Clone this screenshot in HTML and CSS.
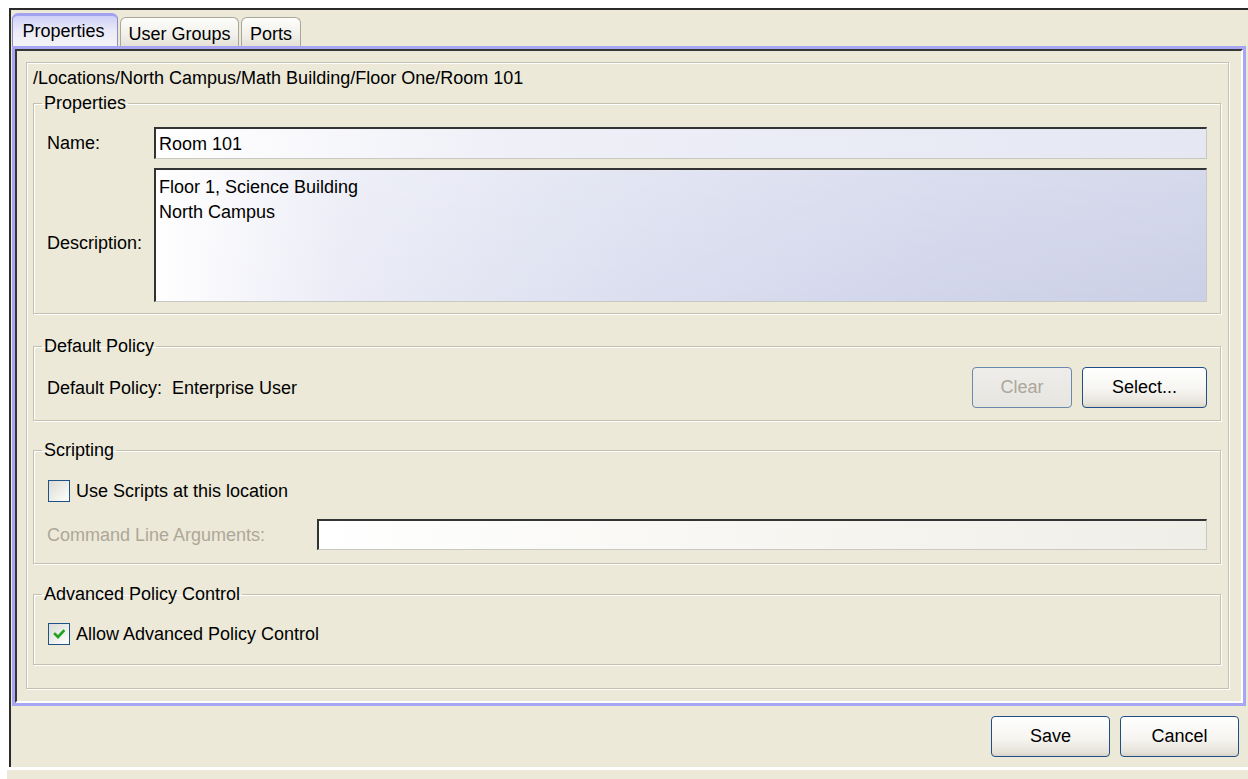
FILE: index.html
```html
<!DOCTYPE html>
<html>
<head>
<meta charset="utf-8">
<title>Location Properties</title>
<link rel="stylesheet" href="styles.css">
</head>
<body>
<div class="window">
  <div class="tabs">
    <div class="tab tab-active tab-props">Properties</div>
    <div class="tab tab-groups">User Groups</div>
    <div class="tab tab-ports">Ports</div>
  </div>

  <div class="tabpanel">
    <div class="panel-body">
      <div class="inner">
        <div class="path">/Locations/North Campus/Math Building/Floor One/Room 101</div>

        <fieldset class="group group-props">
          <legend>Properties</legend>
          <div class="form-grid">
            <span class="lbl">Name:</span>
            <div class="field name-field">Room 101</div>
            <span class="lbl lbl-desc">Description:</span>
            <div class="field desc-field">Floor 1, Science Building<br>North Campus</div>
          </div>
        </fieldset>

        <fieldset class="group group-policy">
          <legend>Default Policy</legend>
          <div class="policy-row">
            <span class="policy-text">Default Policy:<span class="policy-value">Enterprise User</span></span>
            <div class="btn-set">
              <button class="btn btn-clear" disabled>Clear</button>
              <button class="btn btn-select">Select...</button>
            </div>
          </div>
        </fieldset>

        <fieldset class="group group-script">
          <legend>Scripting</legend>
          <div class="check-row">
            <span class="check"></span>
            <span>Use Scripts at this location</span>
          </div>
          <div class="cmd-row">
            <span class="lbl-disabled">Command Line Arguments:</span>
            <div class="field cmd-field"></div>
          </div>
        </fieldset>

        <fieldset class="group group-adv">
          <legend>Advanced Policy Control</legend>
          <div class="check-row">
            <span class="check checked">
              <svg width="20" height="20" viewBox="0 0 20 20"><polyline points="6,10 9,13 14.5,7" fill="none" stroke="#21a121" stroke-width="2.6" stroke-linecap="square"/></svg>
            </span>
            <span>Allow Advanced Policy Control</span>
          </div>
        </fieldset>
      </div>
    </div>
  </div>

  <div class="footer">
    <button class="btn btn-foot">Save</button>
    <button class="btn btn-foot">Cancel</button>
  </div>
</div>
<div class="bottom-strip"></div>
</body>
</html>
```

FILE: styles.css
```css
* { box-sizing: border-box; }

html, body {
  margin: 0;
  padding: 0;
}

body {
  background: #fff;
  width: 1248px;
  height: 779px;
  overflow: hidden;
  font-family: "Liberation Sans", Arial, sans-serif;
  font-size: 18px;
  line-height: 20px;
  color: #000;
}

/* outer dialog frame */
.window {
  margin: 8px 0 0 9px;
  height: 759px;
  border-top: 2px solid #2a2a2a;
  border-left: 2px solid #2a2a2a;
  background: #ece9d8;
  padding: 3px 2px 0 1px;
  display: flex;
  flex-direction: column;
}

/* tab strip */
.tabs {
  display: flex;
  align-items: flex-end;
  height: 33px;
  gap: 2px;
}

.tab {
  height: 29px;
  border: 1px solid #a9a79a;
  border-bottom: none;
  border-radius: 6px 6px 0 0;
  background: linear-gradient(#fdfdfb, #f1f0ea 60%, #e4e2d6);
  display: flex;
  align-items: center;
  justify-content: center;
  padding-top: 3px;
}

.tab-active {
  height: 33px;
  border-color: #8d8cc4;
  border-top: 3px solid #a3a2f1;
  background: linear-gradient(#cfcff7, #ebebf8 50%, #f4f3f6);
  padding-top: 0;
  padding-right: 3px;
}

.tab-props { width: 106px; }
.tab-groups { width: 119px; }
.tab-ports { width: 60px; }

/* tab content panel */
.tabpanel {
  width: 1234px;
  height: 660px;
  border: 3px solid #a7a6f2;
  flex: none;
}

.panel-body {
  height: 100%;
  border-top: 2px solid #363636;
  border-left: 2px solid #363636;
  border-right: 2px solid #fff;
  border-bottom: 2px solid #fff;
  padding: 11px 12px 0 9px;
}

.inner {
  height: 627px;
  border: 1px solid #c4c1b1;
  box-shadow: inset 1px 1px 0 #fff, 1px 1px 0 #fff;
  padding: 5px 7px 0 6px;
}

.path {
  height: 20px;
  white-space: nowrap;
}

/* etched group boxes */
.group {
  margin: 0;
  border: 1px solid #c4c1b1;
  box-shadow: inset 1px 1px 0 #fff, 1px 1px 0 #fff;
  padding: 0 13px;
  min-width: 0;
}

.group legend {
  padding: 0 2px;
  margin-left: -5px;
  line-height: 20px;
  height: 20px;
}

.group-props {
  margin-top: 5px;
  padding-top: 14px;
  padding-bottom: 11px;
}

.group-policy {
  margin-top: 22px;
  padding-top: 11px;
  padding-bottom: 12px;
}

.group-script {
  margin-top: 19px;
  padding-top: 19px;
  padding-bottom: 13px;
}

.group-adv {
  margin-top: 20px;
  padding-top: 18px;
  padding-bottom: 18px;
}

/* label / field grid */
.form-grid {
  display: grid;
  grid-template-columns: 107px 1fr;
  row-gap: 9px;
  align-items: center;
}

.lbl-desc {
  padding-top: 15px;
}

.field {
  border-top: 2px solid #333;
  border-left: 2px solid #333;
  border-right: 1px solid #c9c9c4;
  border-bottom: 1px solid #c9c9c4;
}

.name-field {
  height: 32px;
  display: flex;
  align-items: center;
  padding: 0 3px;
  background: linear-gradient(to right, #ffffff 0%, #eeeff7 35%, #e5e7f3 100%);
}

.desc-field {
  height: 134px;
  padding: 5px 3px;
  line-height: 25px;
  background:
    linear-gradient(to bottom, rgba(255,255,255,0.2), rgba(255,255,255,0)),
    linear-gradient(to right, #ffffff 0%, #eaebf6 18%, #dcdff0 45%, #d1d5ea 75%, #cbd0e7 100%);
}

/* default policy row */
.policy-row {
  display: flex;
  align-items: center;
  justify-content: space-between;
  height: 41px;
}

.policy-value {
  margin-left: 10px;
}

.btn-set {
  display: flex;
  gap: 10px;
}

.btn {
  font-family: "Liberation Sans", Arial, sans-serif;
  font-size: 18px;
  color: #000;
  height: 41px;
  border: 1px solid #1f4f86;
  border-radius: 4px;
  background: linear-gradient(#ffffff, #f6f5f1 55%, #e6e3da 90%, #d8d3c7);
  padding: 0;
  margin: 0;
}

.btn-clear {
  width: 100px;
  color: #aca899;
  border-color: #6a89ad;
  background: linear-gradient(#eeedea, #e6e5e0);
}

.btn-select {
  width: 125px;
}

/* checkbox rows */
.check-row {
  display: flex;
  align-items: center;
  height: 24px;
  gap: 6px;
  padding-left: 1px;
}

.check {
  width: 22px;
  height: 22px;
  border: 1px solid #1f5286;
  background: linear-gradient(135deg, #dcdcd6, #f4f4f0 70%, #ffffff);
  display: flex;
  align-items: center;
  justify-content: center;
}

.cmd-row {
  display: flex;
  align-items: center;
  margin-top: 16px;
}

.lbl-disabled {
  color: #aca899;
  width: 270px;
  flex: none;
}

.cmd-field {
  flex: 1;
  height: 31px;
  background: linear-gradient(to right, #ffffff 0%, #f7f6f2 50%, #efeee7 100%);
}

/* dialog buttons */
.footer {
  display: flex;
  justify-content: flex-end;
  gap: 10px;
  padding: 10px 7px 10px 0;
}

.btn-foot {
  width: 119px;
}

.bottom-strip {
  margin: 3px 0 0 7px;
  height: 9px;
  background: #ece9d8;
}
```
